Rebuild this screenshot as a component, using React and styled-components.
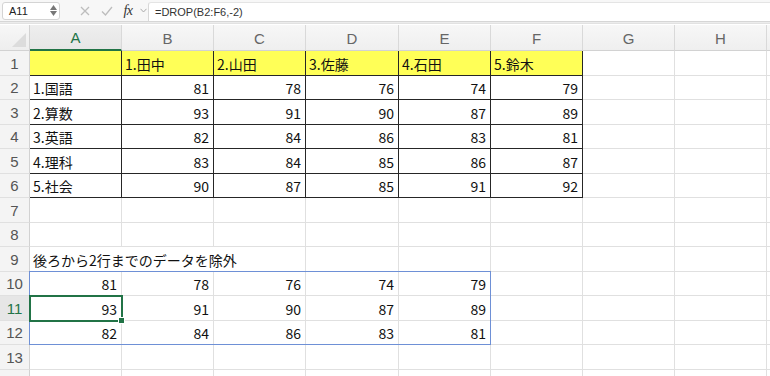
import React from 'react';
import styled, { createGlobalStyle } from 'styled-components';

const Global = createGlobalStyle`
  html, body { margin: 0; padding: 0; background: #fff; }
  body {
    width: 770px; height: 376px; overflow: hidden;
    font-family: "Noto Sans CJK JP", "Noto Sans", sans-serif;
  }
`;

const Page = styled.div`
  width: 770px;
  height: 376px;
  overflow: hidden;
  display: flex;
  flex-direction: column;
`;

const FormulaBar = styled.div`
  height: 22px;
  flex: 0 0 22px;
  box-sizing: border-box;
  display: flex;
  align-items: center;
  background: #f7f7f7;
  border-bottom: 1px solid #d6d6d6;
  box-shadow: 0 1px 0 #ececec, 0 2px 0 #e2e2e2;
  margin-bottom: 3px;
  padding-left: 2px;
`;

const NameBox = styled.div`
  width: 58px;
  height: 18px;
  box-sizing: border-box;
  background: #fff;
  border: 1px solid #d4d4d4;
  border-radius: 3px;
  display: flex;
  align-items: center;
  justify-content: space-between;
  padding: 0 2px 0 6px;
  font-family: "Liberation Sans", Arial, sans-serif;
  font-size: 11px;
  color: #222;
`;

const Spinner = styled.div`
  display: flex;
  flex-direction: column;
  align-items: center;
  gap: 1px;
  margin-left: 2px;
`;

const BarIcons = styled.div`
  display: flex;
  align-items: center;
  height: 100%;
  padding-left: 14px;
`;

const IconSlot = styled.div`
  width: ${p => p.$w || 22}px;
  display: flex;
  align-items: center;
  justify-content: center;
`;

const Fx = styled.span`
  font-family: "Liberation Serif", "Times New Roman", serif;
  font-style: italic;
  font-size: 14px;
  color: #333;
  letter-spacing: -0.5px;
`;

const FormulaInput = styled.div`
  flex: 1;
  height: 19px;
  box-sizing: border-box;
  margin-top: 1px;
  background: #fff;
  border-left: 1px solid #d8d8d8;
  border-top: 1px solid #e4e4e4;
  border-radius: 3px 0 0 0;
  display: flex;
  align-items: center;
  padding-left: 6px;
  font-family: "Liberation Sans", Arial, sans-serif;
  font-size: 11px;
  color: #333;
`;

const Grid = styled.div`
  display: grid;
  grid-template-columns: 30px 92px 92px 92px 93px 92px 92px 92px 92px 1fr;
  grid-template-rows: 26px repeat(7, 25px 24px);
  flex: 1;
  overflow: hidden;
`;

const Corner = styled.div`
  grid-column: 1;
  grid-row: 1;
  background: linear-gradient(#f7f7f7, #eeeeee);
  border-right: 1px solid #d2d2d2;
  border-bottom: 1px solid #d2d2d2;
  box-sizing: border-box;
  display: flex;
  align-items: flex-end;
  justify-content: flex-end;
  padding: 0 3px 3px 0;
`;

const ColHead = styled.div`
  grid-row: 1;
  grid-column: ${p => p.$c};
  background: ${p => (p.$active ? 'linear-gradient(#eeeeee, #e6e6e6)' : 'linear-gradient(#f7f7f7, #efefef)')};
  border-right: 1px solid #d9d9d9;
  border-bottom: ${p => (p.$active ? '2px solid #217346' : '1px solid #d2d2d2')};
  box-sizing: border-box;
  display: flex;
  align-items: center;
  justify-content: center;
  font-family: "Liberation Sans", Arial, sans-serif;
  font-size: 15px;
  color: ${p => (p.$active ? '#217346' : '#666')};
  padding-top: 1px;
`;

const RowHead = styled.div`
  grid-column: 1;
  grid-row: ${p => p.$r};
  background: ${p => (p.$active ? '#e6e6e6' : '#f4f4f4')};
  border-right: 1px solid #d2d2d2;
  border-bottom: 1px solid #e0e0e0;
  box-sizing: border-box;
  display: flex;
  align-items: center;
  justify-content: center;
  font-family: "Liberation Sans", Arial, sans-serif;
  font-size: 15px;
  color: ${p => (p.$active ? '#217346' : '#555')};
`;

const Cell = styled.div`
  grid-column: ${p => p.$c};
  grid-row: ${p => p.$r};
  box-sizing: border-box;
  background: ${p => (p.$fill ? '#ffff57' : 'transparent')};
  border-right: 1px solid ${p => (p.$boxed ? '#262626' : p.$noRight ? 'transparent' : '#e0e0e0')};
  border-bottom: 1px solid ${p => (p.$boxed ? '#262626' : '#e0e0e0')};
  display: flex;
  align-items: center;
  justify-content: ${p => (p.$num ? 'flex-end' : 'flex-start')};
  padding: 1px ${p => (p.$num ? '4px' : '3px')} 0 3px;
  font-size: 14px;
  color: #111;
  white-space: nowrap;
  overflow: visible;
  min-width: 0;
  position: relative;
  z-index: ${p => (p.$over ? 2 : 0)};
`;

const SpillFrame = styled.div`
  grid-column: 2 / 7;
  grid-row: 11 / 14;
  margin: -1px 0 0 -1px;
  border: 1px solid #6e90d6;
  pointer-events: none;
  position: relative;
  z-index: 3;
`;

const Selection = styled.div`
  grid-column: 2;
  grid-row: 12;
  margin: -1px;
  border: 2px solid #217346;
  pointer-events: none;
  position: relative;
  z-index: 4;
`;

const FillHandle = styled.div`
  position: absolute;
  right: -4px;
  bottom: -4px;
  width: 5px;
  height: 5px;
  background: #217346;
  border: 1px solid #fff;
`;

const header = ['', '1.田中', '2.山田', '3.佐藤', '4.石田', '5.鈴木'];
const table = [
  ['1.国語', 81, 78, 76, 74, 79],
  ['2.算数', 93, 91, 90, 87, 89],
  ['3.英語', 82, 84, 86, 83, 81],
  ['4.理科', 83, 84, 85, 86, 87],
  ['5.社会', 90, 87, 85, 91, 92],
];
const spill = [
  [81, 78, 76, 74, 79],
  [93, 91, 90, 87, 89],
  [82, 84, 86, 83, 81],
];

const COLS = ['A', 'B', 'C', 'D', 'E', 'F', 'G', 'H'];

function cellData(r, c) {
  if (r === 1 && c < 6) return { v: header[c], fill: true, boxed: true };
  if (r >= 2 && r <= 6 && c < 6) {
    const v = table[r - 2][c];
    return { v, boxed: true, num: typeof v === 'number' };
  }
  if (r === 9 && c === 0) return { v: '後ろから2行までのデータを除外', over: true, noRight: true };
  if (r === 9 && c === 1) return { v: '', noRight: true };
  if (r >= 10 && r <= 12 && c < 5) return { v: spill[r - 10][c], num: true };
  return { v: '' };
}

export default function App() {
  const rows = Array.from({ length: 14 }, (_, i) => i + 1);
  return (
    <Page>
      <Global />
      <FormulaBar>
        <NameBox>
          <span>A11</span>
          <Spinner>
            <svg width="7" height="5" viewBox="0 0 7 5"><path d="M3.5 0 L7 5 L0 5 Z" fill="#777" /></svg>
            <svg width="7" height="5" viewBox="0 0 7 5"><path d="M0 0 L7 0 L3.5 5 Z" fill="#777" /></svg>
          </Spinner>
        </NameBox>
        <BarIcons>
          <IconSlot $w={22}>
            <svg width="10" height="10" viewBox="0 0 10 10"><path d="M1 1 L9 9 M9 1 L1 9" stroke="#bdbdbd" strokeWidth="1.3" /></svg>
          </IconSlot>
          <IconSlot $w={22}>
            <svg width="12" height="10" viewBox="0 0 12 10"><path d="M1 5.5 L4.5 9 L11 1" stroke="#bdbdbd" strokeWidth="1.3" fill="none" /></svg>
          </IconSlot>
          <IconSlot $w={20}>
            <Fx>fx</Fx>
          </IconSlot>
          <IconSlot $w={10}>
            <svg width="7" height="5" viewBox="0 0 7 5"><path d="M0.5 0.8 L3.5 4 L6.5 0.8" stroke="#aaa" strokeWidth="1" fill="none" /></svg>
          </IconSlot>
        </BarIcons>
        <FormulaInput>=DROP(B2:F6,-2)</FormulaInput>
      </FormulaBar>
      <Grid>
        <Corner>
          <svg width="14" height="14" viewBox="0 0 14 14"><path d="M14 0 L14 14 L0 14 Z" fill="#dcdcdc" /></svg>
        </Corner>
        {COLS.map((c, ci) => (
          <ColHead key={c} $c={ci + 2} $active={c === 'A'}>{c}</ColHead>
        ))}
        <ColHead $c={10} />
        {rows.map(r => (
          <React.Fragment key={r}>
            <RowHead $r={r + 1} $active={r === 11}>{r <= 13 ? r : ''}</RowHead>
            {COLS.map((c, ci) => {
              const d = cellData(r, ci);
              return (
                <Cell
                  key={c}
                  $r={r + 1}
                  $c={ci + 2}
                  $fill={d.fill}
                  $boxed={d.boxed}
                  $num={d.num}
                  $over={d.over}
                  $noRight={d.noRight}
                >
                  {d.v}
                </Cell>
              );
            })}
            <Cell $r={r + 1} $c={10} />
          </React.Fragment>
        ))}
        <SpillFrame />
        <Selection>
          <FillHandle />
        </Selection>
      </Grid>
    </Page>
  );
}
